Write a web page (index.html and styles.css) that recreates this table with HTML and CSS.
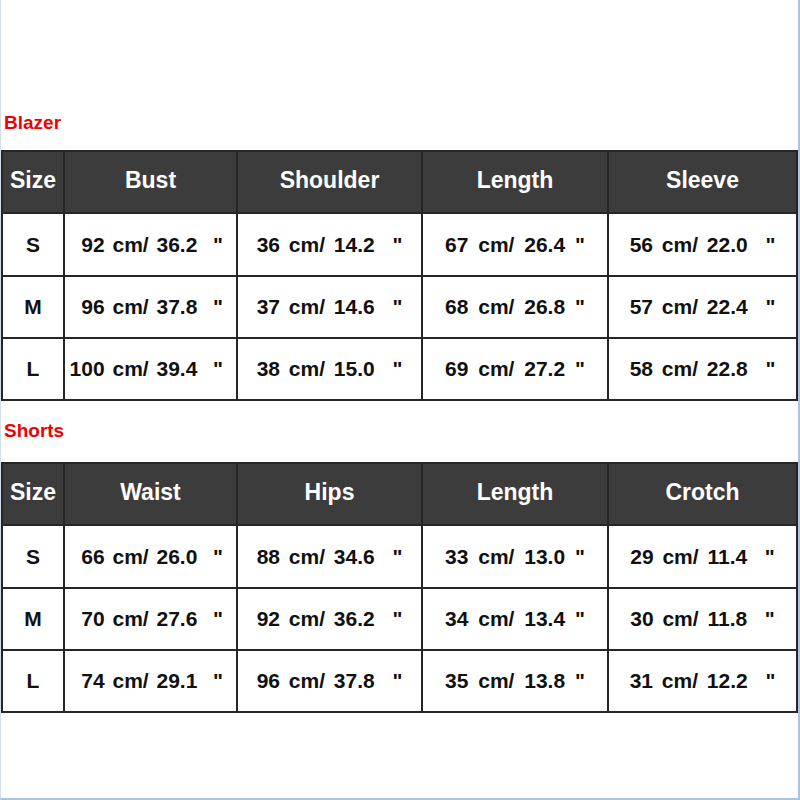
FILE: index.html
```html
<!DOCTYPE html>
<html>
<head>
<meta charset="utf-8">
<link rel="stylesheet" href="styles.css">
</head>
<body>
<div class="page">
  <div class="title title-blazer">Blazer</div>
  <div class="grid">
    <div class="cell head">Size</div>
    <div class="cell head">Bust</div>
    <div class="cell head">Shoulder</div>
    <div class="cell head">Length</div>
    <div class="cell head">Sleeve</div>

    <div class="cell size">S</div>
    <div class="cell c1">92 cm/ 36.2  "</div>
    <div class="cell c2">36 cm/ 14.2  "</div>
    <div class="cell c3">67 cm/ 26.4 "</div>
    <div class="cell c4">56 cm/ 22.0  "</div>

    <div class="cell size">M</div>
    <div class="cell c1">96 cm/ 37.8  "</div>
    <div class="cell c2">37 cm/ 14.6  "</div>
    <div class="cell c3">68 cm/ 26.8 "</div>
    <div class="cell c4">57 cm/ 22.4  "</div>

    <div class="cell size">L</div>
    <div class="cell c1">100 cm/ 39.4  "</div>
    <div class="cell c2">38 cm/ 15.0  "</div>
    <div class="cell c3">69 cm/ 27.2 "</div>
    <div class="cell c4">58 cm/ 22.8  "</div>
  </div>

  <div class="title title-shorts">Shorts</div>
  <div class="grid">
    <div class="cell head">Size</div>
    <div class="cell head">Waist</div>
    <div class="cell head">Hips</div>
    <div class="cell head">Length</div>
    <div class="cell head">Crotch</div>

    <div class="cell size">S</div>
    <div class="cell c1">66 cm/ 26.0  "</div>
    <div class="cell c2">88 cm/ 34.6  "</div>
    <div class="cell c3">33 cm/ 13.0 "</div>
    <div class="cell c4">29 cm/ 11.4  "</div>

    <div class="cell size">M</div>
    <div class="cell c1">70 cm/ 27.6  "</div>
    <div class="cell c2">92 cm/ 36.2  "</div>
    <div class="cell c3">34 cm/ 13.4 "</div>
    <div class="cell c4">30 cm/ 11.8  "</div>

    <div class="cell size">L</div>
    <div class="cell c1">74 cm/ 29.1  "</div>
    <div class="cell c2">96 cm/ 37.8  "</div>
    <div class="cell c3">35 cm/ 13.8 "</div>
    <div class="cell c4">31 cm/ 12.2  "</div>
  </div>
</div>
</body>
</html>
```

FILE: styles.css
```css
html, body {
  margin: 0;
  padding: 0;
  background: #ffffff;
}

.page {
  box-sizing: border-box;
  width: 800px;
  height: 800px;
  border-left: 1px solid #d3ddec;
  border-right: 2px solid #a9c3e2;
  border-bottom: 2px solid #a9c3e2;
  padding-top: 112px;
  font-family: "Liberation Sans", Arial, sans-serif;
  font-weight: bold;
  display: flex;
  flex-direction: column;
}

.title {
  color: #f00000;
  font-size: 19px;
  line-height: 21px;
  height: 21px;
  padding-left: 3px;
}

.title-blazer {
  margin-bottom: 17px;
}

.title-shorts {
  margin-top: 19px;
  margin-bottom: 21px;
}

.grid {
  display: grid;
  grid-template-columns: 60px 171px 183px 184px 187px;
  grid-template-rows: 60px 61px 60px 60px;
  gap: 2px;
  padding: 2px;
  background: #262626;
  width: 797px;
  box-sizing: border-box;
}

.cell {
  background: #ffffff;
  color: #111111;
  font-size: 21px;
  display: flex;
  align-items: center;
  justify-content: center;
  white-space: pre;
}

.head {
  background: #3c3c3c;
  color: #ffffff;
  font-size: 23px;
  padding-bottom: 3px;
  box-sizing: border-box;
}

.c1 {
  word-spacing: 2px;
  justify-content: flex-end;
  padding-right: 13px;
}

.c2 {
  word-spacing: 3px;
}

.c3 {
  word-spacing: 4px;
}

.c4 {
  word-spacing: 3px;
}
```
